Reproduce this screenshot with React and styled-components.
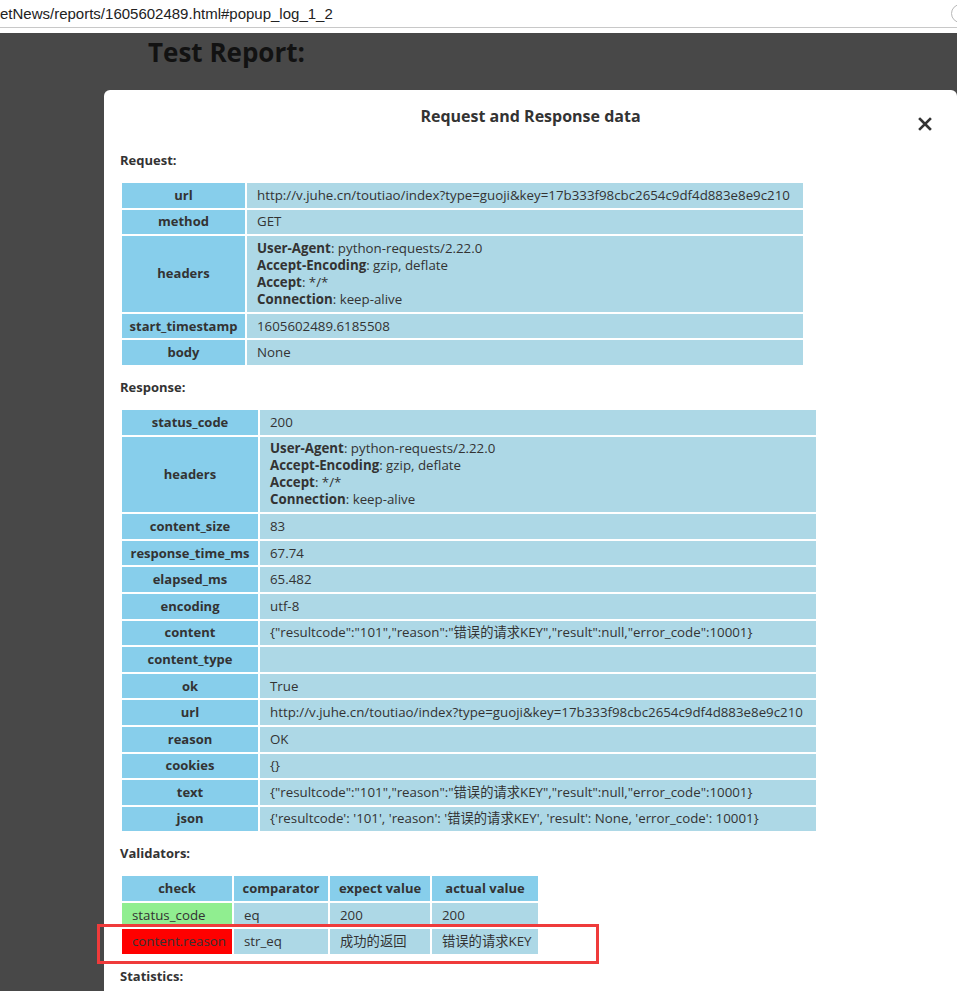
import React from 'react';
import styled, { createGlobalStyle } from 'styled-components';

const GlobalStyle = createGlobalStyle`
  html, body {
    margin: 0;
    padding: 0;
  }
  body {
    background: #484848;
    font-family: "Open Sans", "Noto Sans CJK SC", sans-serif;
    overflow: hidden;
  }
`;

const AddressBar = styled.div`
  height: 27px;
  background: #fff;
  border-bottom: 1px solid #c8c8c8;
  display: flex;
  align-items: center;
  justify-content: space-between;
  overflow: hidden;
`;
const UrlText = styled.span`
  font-family: "Liberation Sans", sans-serif;
  font-size: 15px;
  color: #222;
  white-space: nowrap;
`;
const BarCircle = styled.span`
  flex: none;
  width: 17px;
  height: 17px;
  border: 1px solid #b8b8b8;
  border-radius: 50%;
  margin-right: -13px;
`;
const BarGap = styled.div`
  height: 5px;
  background: #fff;
`;

const Page = styled.div`
  background: #484848;
  height: 958px;
  overflow: hidden;
`;
const PageTitle = styled.h1`
  margin: 4px 0 0 148px;
  font-size: 26px;
  line-height: 30px;
  font-weight: 700;
  color: #121212;
`;

const Modal = styled.div`
  position: relative;
  margin: 23px 0 0 104px;
  min-height: 910px;
  padding: 15px 16px 0;
  background: #fff;
  border-radius: 6px 6px 0 0;
  color: #333;
`;
const ModalTitle = styled.h2`
  margin: 0;
  text-align: center;
  font-size: 16px;
  line-height: 22px;
  font-weight: 700;
  color: #333;
`;
const Close = styled.button`
  position: absolute;
  top: 26px;
  right: 24px;
  width: 16px;
  height: 16px;
  padding: 0;
  border: 0;
  background: none;
  display: flex;
  align-items: center;
  justify-content: center;
`;

const Label = styled.h3`
  margin: ${p => (p.$first ? '25px' : '12px')} 0 12px;
  font-size: 13px;
  line-height: 17px;
  font-weight: 700;
  color: #333;
`;

const Table = styled.table`
  width: ${p => p.$width}px;
  border-collapse: separate;
  border-spacing: 2px;
  table-layout: fixed;
  font-size: 13.3px;
  line-height: 17px;
  color: #333;

  th, td {
    box-sizing: border-box;
    padding: 3.8px 10px;
    white-space: nowrap;
    overflow: hidden;
    vertical-align: middle;
  }
  th {
    padding-left: 2px;
    padding-right: 2px;
    background: #87ceeb;
    font-size: 13px;
    font-weight: 700;
    text-align: center;
  }
  td {
    background: #add8e6;
    text-align: left;
  }
`;
const Cell = styled.td`
  && {
    background: ${p => p.$bg || '#add8e6'};
  }
`;
const Wrap = styled.div`
  position: relative;
`;
const Highlight = styled.div`
  position: absolute;
  left: -23px;
  top: 50px;
  width: 502px;
  height: 40px;
  box-sizing: border-box;
  border: 3px solid #ef3b3b;
  pointer-events: none;
`;

const url = 'http://v.juhe.cn/toutiao/index?type=guoji&key=17b333f98cbc2654c9df4d883e8e9c210';
const headers = [
  ['User-Agent', 'python-requests/2.22.0'],
  ['Accept-Encoding', 'gzip, deflate'],
  ['Accept', '*/*'],
  ['Connection', 'keep-alive'],
];
const textBody = '{"resultcode":"101","reason":"错误的请求KEY","result":null,"error_code":10001}';

const request = [
  ['url', url],
  ['method', 'GET'],
  ['headers', headers],
  ['start_timestamp', '1605602489.6185508'],
  ['body', 'None'],
];
const response = [
  ['status_code', '200'],
  ['headers', headers],
  ['content_size', '83'],
  ['response_time_ms', '67.74'],
  ['elapsed_ms', '65.482'],
  ['encoding', 'utf-8'],
  ['content', textBody],
  ['content_type', ''],
  ['ok', 'True'],
  ['url', url],
  ['reason', 'OK'],
  ['cookies', '{}'],
  ['text', textBody],
  ['json', "{'resultcode': '101', 'reason': '错误的请求KEY', 'result': None, 'error_code': 10001}"],
];
const validators = [
  { check: 'status_code', comparator: 'eq', expect: '200', actual: '200', ok: true },
  { check: 'content.reason', comparator: 'str_eq', expect: '成功的返回', actual: '错误的请求KEY', ok: false },
];
const validatorCols = [
  ['check', 110],
  ['comparator', 94],
  ['expect value', 100],
  ['actual value', 106],
];

function HeaderLines({ items }) {
  return items.map(([k, v]) => (
    <div key={k}><b>{k}</b>: {v}</div>
  ));
}

function KeyValueTable({ rows, keyWidth }) {
  const valueWidth = 556;
  return (
    <Table $width={keyWidth + valueWidth + 6}>
      <colgroup>
        <col style={{ width: keyWidth }} />
        <col style={{ width: valueWidth }} />
      </colgroup>
      <tbody>
        {rows.map(([k, v], i) => (
          <tr key={k + i}>
            <th>{k}</th>
            <td>{Array.isArray(v) ? <HeaderLines items={v} /> : v}</td>
          </tr>
        ))}
      </tbody>
    </Table>
  );
}

function CloseIcon() {
  return (
    <svg width="14" height="14" viewBox="0 0 14 14">
      <path d="M2 2 L12 12 M12 2 L2 12" stroke="#333" strokeWidth="2.6" strokeLinecap="square" />
    </svg>
  );
}

export default function App() {
  const validatorWidth = validatorCols.reduce((s, c) => s + c[1], 0) + 10;
  return (
    <>
      <GlobalStyle />
      <AddressBar>
        <UrlText>etNews/reports/1605602489.html#popup_log_1_2</UrlText>
        <BarCircle />
      </AddressBar>
      <BarGap />
      <Page>
        <PageTitle>Test Report:</PageTitle>
        <Modal>
          <ModalTitle>Request and Response data</ModalTitle>
          <Close aria-label="close"><CloseIcon /></Close>

          <Label $first>Request:</Label>
          <KeyValueTable rows={request} keyWidth={123} />

          <Label>Response:</Label>
          <KeyValueTable rows={response} keyWidth={136} />

          <Label>Validators:</Label>
          <Wrap>
            <Table $width={validatorWidth}>
              <colgroup>
                {validatorCols.map(([name, w]) => <col key={name} style={{ width: w }} />)}
              </colgroup>
              <thead>
                <tr>
                  {validatorCols.map(([name]) => <th key={name}>{name}</th>)}
                </tr>
              </thead>
              <tbody>
                {validators.map(v => (
                  <tr key={v.check}>
                    <Cell $bg={v.ok ? '#90ee90' : '#ff0000'}>{v.check}</Cell>
                    <Cell>{v.comparator}</Cell>
                    <Cell>{v.expect}</Cell>
                    <Cell>{v.actual}</Cell>
                  </tr>
                ))}
              </tbody>
            </Table>
            <Highlight />
          </Wrap>

          <Label>Statistics:</Label>
        </Modal>
      </Page>
    </>
  );
}
